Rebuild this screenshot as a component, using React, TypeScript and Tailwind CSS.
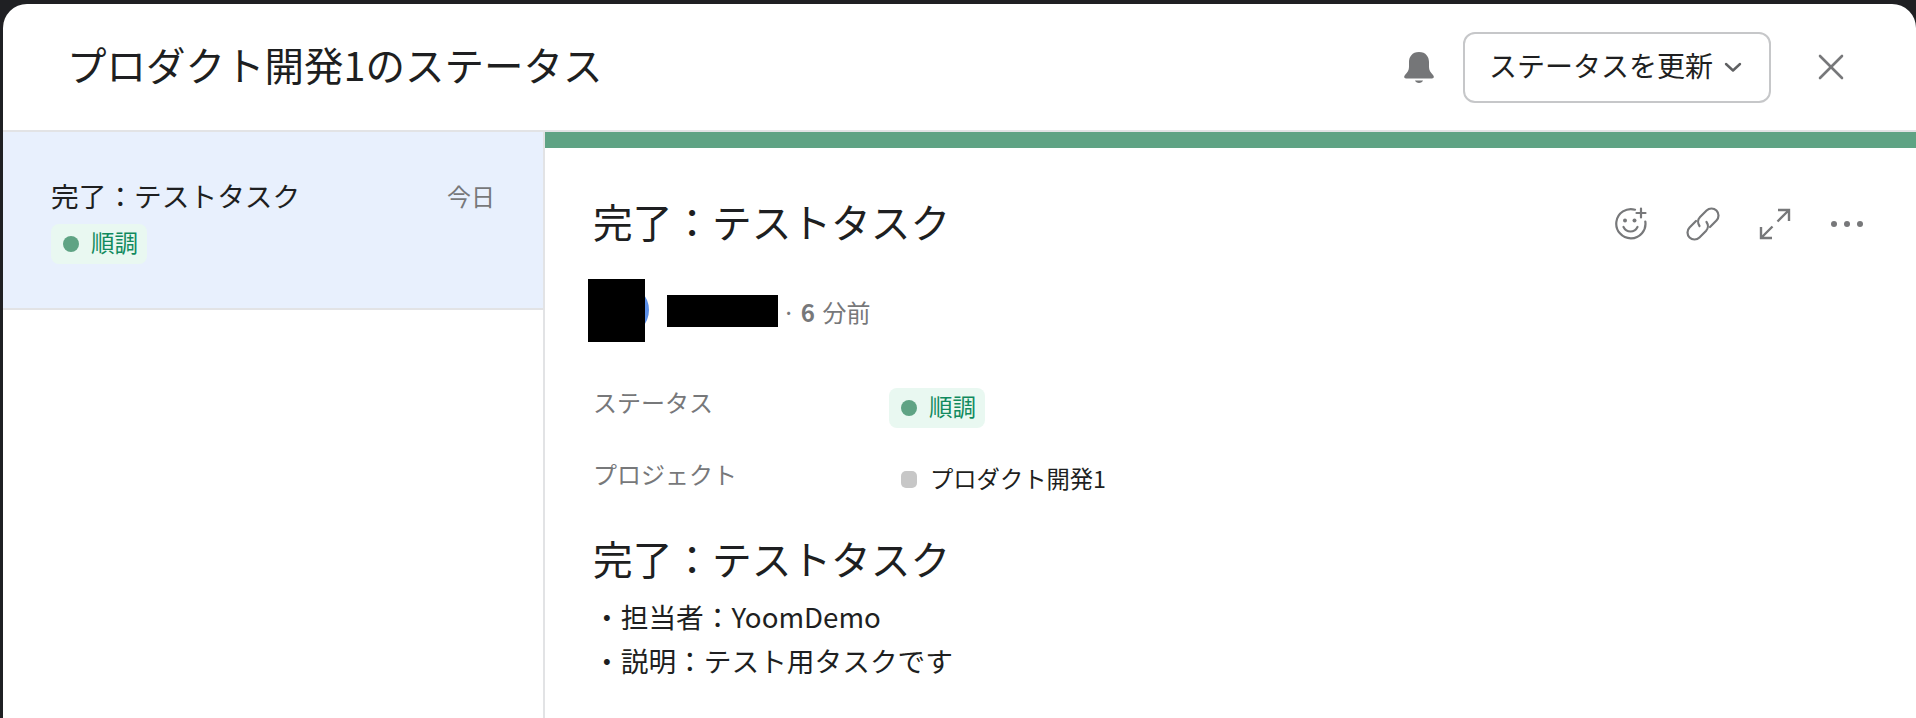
const Dot = () => <span className="w-4 h-4 rounded-full bg-[#5fa384]" />

const StatusChip = () => (
  <span className="flex items-center gap-3 w-[96px] h-10 pl-3 rounded-lg bg-[#e9f8f1] text-[23.500px] text-[#118a5e]">
    <Dot />
    <span className="-mt-[2px]">順調</span>
  </span>
)

const BellIcon = () => (
  <svg width="30" height="31" viewBox="0 0 30 31" fill="#757678">
    <path d="M15 0C8 0 5 5 5 10v5c0 3-1.500 5.500-4 8-1.500 1.500-.8 3.500 1 3.500h26c1.800 0 2.500-2 1-3.500-2.500-2.500-4-5-4-8v-5C25 5 22 0 15 0z" />
    <path d="M11 28.500h8c-.5 1.500-2 2.500-4 2.500s-3.500-1-4-2.500z" />
  </svg>
)

const CloseIcon = () => (
  <svg width="26" height="26" viewBox="0 0 26 26" fill="none" stroke="#77787a" strokeWidth="2.600" strokeLinecap="round">
    <line x1="2" y1="2" x2="24" y2="24" />
    <line x1="24" y1="2" x2="2" y2="24" />
  </svg>
)

const ChevronIcon = () => (
  <svg width="18" height="12" viewBox="0 0 18 12" fill="none" stroke="#5f6062" strokeWidth="2.400" strokeLinecap="round" strokeLinejoin="round">
    <polyline points="2 3 9 9.500 16 3" />
  </svg>
)

const SmilePlusIcon = () => (
  <svg width="34" height="34" viewBox="0 0 34 34" fill="none" stroke="#77787a" strokeWidth="2.200" strokeLinecap="round">
    <path d="M21 2.700A14.600 14.600 0 1 0 31.300 14.500" />
    <path d="M9.500 20c1.500 3 4 4.500 7 4.500s5.500-1.500 7-4.500" />
    <path d="M27 1.500v9M22.500 6h9" />
    <circle cx="11" cy="13.500" r="2" fill="#77787a" stroke="none" />
    <circle cx="20.500" cy="13.500" r="2" fill="#77787a" stroke="none" />
  </svg>
)

const LinkIcon = () => (
  <svg width="34" height="34" viewBox="0 0 34 34" fill="none" stroke="#77787a" strokeWidth="2.200" strokeLinecap="round">
    <path d="M24 20 30.450 13.450A7 7 0 0 0 20.550 3.550L14.050 10.050A7 7 0 0 0 13.500 19" />
    <path d="M10 14 3.550 20.550A7 7 0 0 0 13.450 30.450L19.950 23.950A7 7 0 0 0 20.500 15" />
  </svg>
)

const ExpandIcon = () => (
  <svg width="34" height="34" viewBox="0 0 34 34" fill="none" stroke="#77787a" strokeWidth="2.400">
    <path d="M20 3h11v11M31 3 19.500 14.500" />
    <path d="M3 20v11h11M3 31l11.500-11.500" />
  </svg>
)

const MoreIcon = () => (
  <svg width="34" height="34" viewBox="0 0 34 34" fill="#77787a">
    <circle cx="4" cy="17" r="3" />
    <circle cx="17" cy="17" r="3" />
    <circle cx="30" cy="17" r="3" />
  </svg>
)

export default function App() {
  return (
    <div className="h-[718px] overflow-hidden bg-[#1f2023] pt-1 pl-[3px] font-['Noto_Sans_CJK_JP',sans-serif] text-[#1e1f21]">
      <div className="flex flex-col h-[714px] bg-white rounded-t-[24px]">
        {/* Header */}
        <header className="flex items-center h-[128px] shrink-0 border-b-2 border-[#e2e3e5] pl-[64px]">
          <h1 className="flex-1 text-[39.500px] leading-none font-normal pb-[7px]">プロダクト開発1のステータス</h1>
          <BellIcon />
          <button className="flex items-center gap-[11px] w-[308px] h-[71px] ml-[29px] pl-[24px] rounded-xl border-2 border-[#c6c7c9] text-[28px]">
            <span className="-mt-[4px]">ステータスを更新</span>
            <ChevronIcon />
          </button>
          <span className="ml-[47px] mr-[72px]"><CloseIcon /></span>
        </header>

        <div className="flex flex-1 min-h-0">
          {/* Left list */}
          <aside className="w-[542px] shrink-0 border-r-2 border-[#e2e3e5]">
            <div className="h-[178px] bg-[#e8f0fd] border-b-2 border-[#e2e3e5] pl-[48px] pr-[48px] pt-[46px]">
              <div className="flex items-center justify-between h-[36px]">
                <span className="text-[27.700px]">完了：テストタスク</span>
                <span className="text-2xl text-[#77787a]">今日</span>
              </div>
              <div className="mt-[10px]"><StatusChip /></div>
            </div>
          </aside>

          {/* Detail */}
          <main className="flex-1 min-w-0">
            <div className="h-4 bg-[#5fa384]" />
            <div className="pl-[48px] pr-[52px]">
              <div className="flex items-center justify-between h-[48px] mt-[51px]">
                <h2 className="text-[39.700px] leading-none font-normal pb-[4px]">完了：テストタスク</h2>
                <div className="flex items-center gap-[38px] mt-[2px]">
                  <SmilePlusIcon />
                  <LinkIcon />
                  <ExpandIcon />
                  <MoreIcon />
                </div>
              </div>

              {/* Author */}
              <div className="flex items-center h-[63px] mt-[32px] -ml-[5px]">
                <div className="relative w-[57px] h-[63px] bg-black">
                  <span className="absolute right-[-4px] top-[5px] w-[30px] h-[52px] rounded-r-full bg-[#5b8fe8]" />
                  <span className="absolute inset-0 bg-black" />
                </div>
                <span className="w-[111px] h-8 ml-[22px] bg-black" />
                <span className="ml-[4px] mt-[2px] text-2xl text-[#77787a]">· <b className="font-bold">6</b> <span className="ml-[2px]">分前</span></span>
              </div>

              {/* Fields */}
              <div className="grid grid-cols-[296px_1fr] mt-[46px] text-2xl">
                <span className="text-[#77787a] leading-[28px]">ステータス</span>
                <StatusChip />
                <span className="text-[#77787a] leading-[28px] mt-[32px]">プロジェクト</span>
                <span className="flex items-center gap-[13px] mt-[33px] pl-3 h-[36px] text-[23.300px] text-[#1e1f21]">
                  <span className="w-4 h-[17px] rounded-[5px] bg-[#c7c7c7]" />
                  プロダクト開発1
                </span>
              </div>

              {/* Description */}
              <h3 className="text-[39.700px] leading-none font-normal mt-[41px]">完了：テストタスク</h3>
              <div className="mt-[16px] text-[27.700px] leading-[44px]">
                <p>・担当者：YoomDemo</p>
                <p>・説明：テスト用タスクです</p>
              </div>
            </div>
          </main>
        </div>
      </div>
    </div>
  )
}
